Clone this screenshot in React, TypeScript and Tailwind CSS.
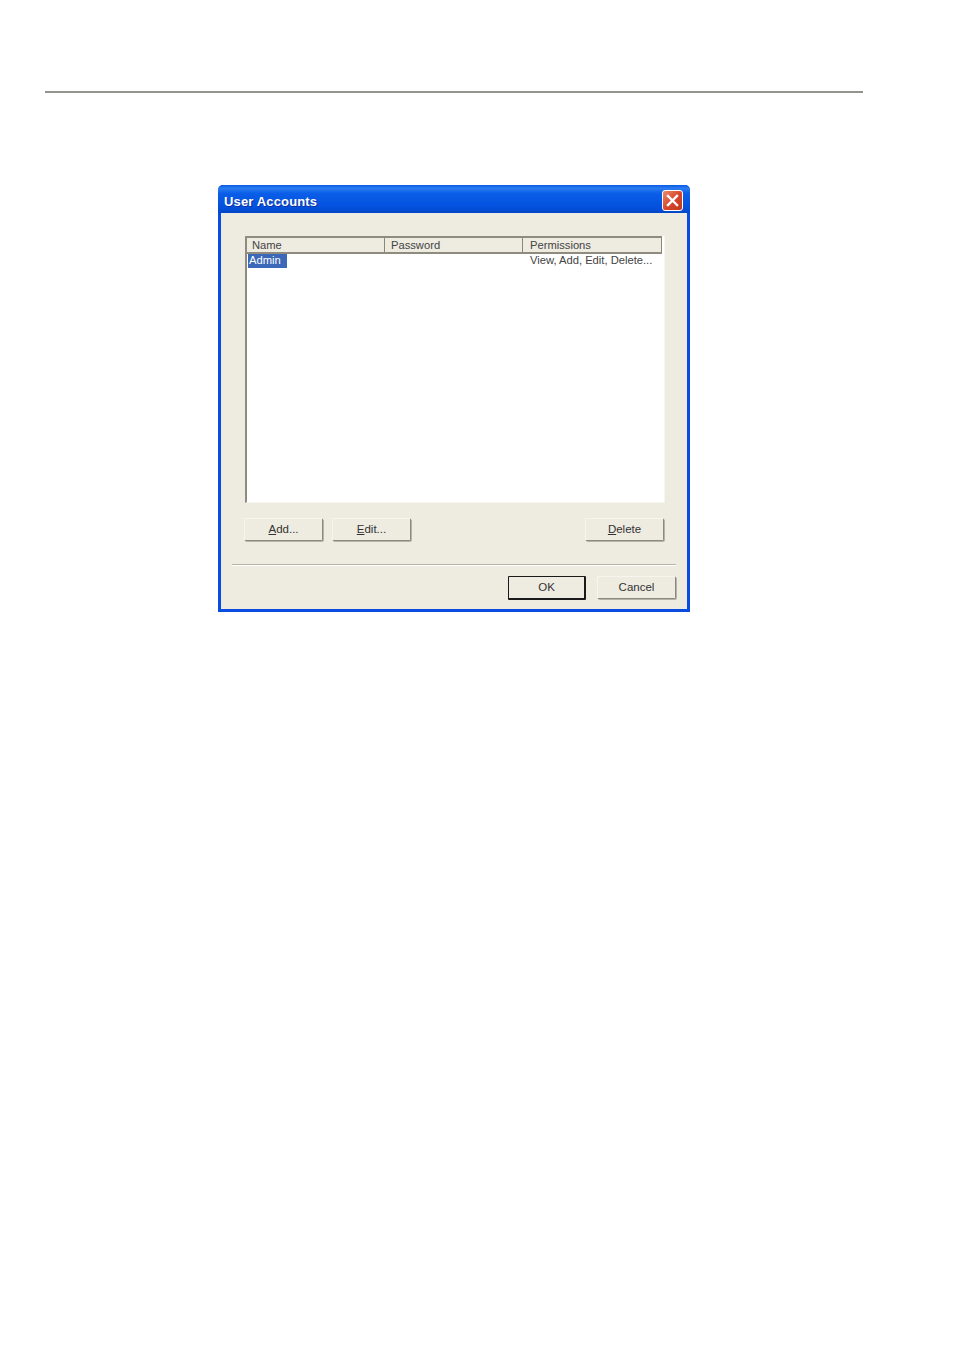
const ui = "font-['Liberation_Sans',sans-serif]";

function Btn({ children, className = "" }: { children: React.ReactNode; className?: string }) {
  return (
    <button className={`flex h-[23px] w-[79px] items-center justify-center rounded-[2px] border border-[#f7f5ee] border-r-[#8c8a80] border-b-[#8c8a80] bg-[#eeebe1] pt-px text-[11.5px] leading-none text-[#333] shadow-[1px_1px_0_#b5b2a6] ${className}`}>
      {children}
    </button>
  );
}

function Head({ children, className = "" }: { children: React.ReactNode; className?: string }) {
  return (
    <div className={`flex h-full items-end border-r border-[#8a8778] text-[11.2px] leading-[13px] text-[#444] ${className}`}>
      {children}
    </div>
  );
}

export default function App() {
  return (
    <div className={`h-[1351px] w-[954px] overflow-hidden bg-white pt-[91px] ${ui}`}>
      <div className="ml-[45px] h-[2px] w-[818px] bg-[#94948c]" />
      <div className="ml-[218px] mt-[92px] flex h-[427px] w-[472px] flex-col rounded-t-[5px] bg-[#0a4be0]">
        <div className="flex h-[28px] items-center justify-between rounded-t-[5px] bg-[linear-gradient(180deg,#0a5ae6_0%,#2a7cf0_12%,#0a5ee8_30%,#0452df_75%,#0347c8_100%)] pl-[6px] pr-[7px]">
          <span className="block pt-[5px] text-[13px] font-bold tracking-[0.15px] text-white [text-shadow:1px_1px_0_#0b2f9c]">User Accounts</span>
          <div className="mt-[3px] flex h-[21px] w-[21px] items-center justify-center rounded-[3px] border border-white bg-[linear-gradient(135deg,#e98a6e,#d6452a_55%,#c0391f)]">
            <svg width="13" height="13" viewBox="0 0 13 13">
              <path d="M2 2 L11 11 M11 2 L2 11" stroke="#fff" strokeWidth="2.4" strokeLinecap="square" />
            </svg>
          </div>
        </div>
        <div className="mx-[3px] mb-[3px] flex flex-1 flex-col bg-[#eeebe1]">
          <div className="ml-[24px] mt-[23px] flex h-[267px] w-[420px] flex-col border-b border-l-2 border-r border-[#8f8c7f] border-b-[#f8f6f0] border-r-[#f8f6f0] bg-white">
            <div className="grid h-[18px] w-[415px] shrink-0 grid-cols-[138px_138px_139px] border-b-2 border-t-2 border-[#8f8c7f] bg-[#eeebe1]">
              <Head className="pl-[5px]">Name</Head>
              <Head className="pl-[6px]">Password</Head>
              <Head className="pl-[7px]">Permissions</Head>
            </div>
            <div className="grid grid-cols-[138px_138px_139px] text-[11.2px] leading-[12px]">
              <div className="pl-px">
                <span className="inline-block h-[14px] w-[39px] bg-[#3b68b8] pl-px text-white">Admin</span>
              </div>
              <div />
              <div className="pl-[7px] text-[#444]">View, Add, Edit, Delete...</div>
            </div>
          </div>
          <div className="ml-[23px] mt-[15px] flex w-[420px] justify-between">
            <div className="flex gap-[9px]">
              <Btn><span><u>A</u>dd...</span></Btn>
              <Btn><span><u>E</u>dit...</span></Btn>
            </div>
            <Btn><span><u>D</u>elete</span></Btn>
          </div>
          <div className="ml-[11px] mt-[23px] h-[2px] w-[444px] border-b border-white bg-[#b5b2a6]" />
          <div className="ml-[287px] mt-[10px] flex gap-[11px]">
            <button className="flex h-[24px] w-[78px] items-center justify-center rounded-[1px] border-2 border-l border-t border-[#1a1a1a] bg-[#eeebe1] text-[11.5px] leading-none text-[#333]">OK</button>
            <Btn>Cancel</Btn>
          </div>
        </div>
      </div>
    </div>
  );
}
